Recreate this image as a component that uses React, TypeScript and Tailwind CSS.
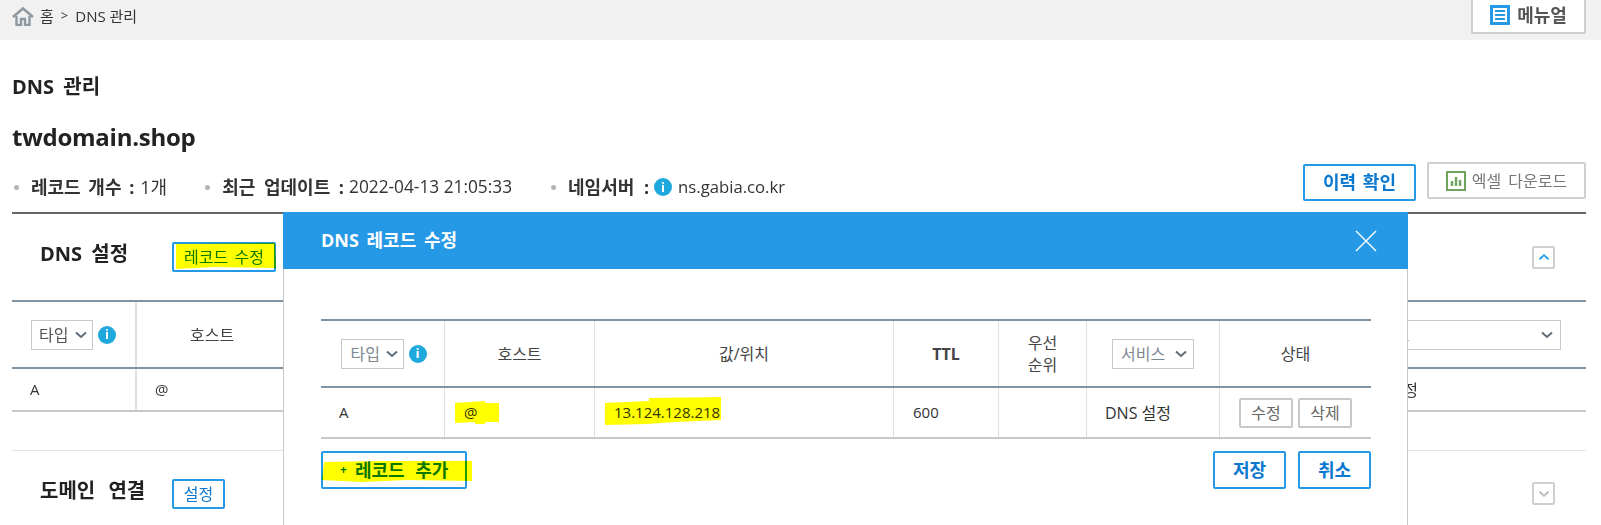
import { ReactNode } from "react";

const FONT = "font-['Open_Sans','Noto_Sans_CJK_KR',sans-serif]";

const Chevron = ({ className = "" }: { className?: string }) => (
  <svg viewBox="0 0 12 8" className={`h-[8px] w-[12px] ${className}`} fill="none" stroke="#5f6b78" strokeWidth="2">
    <polyline points="1,1.5 6,6 11,1.5" />
  </svg>
);

const Info = ({ className = "" }: { className?: string }) => (
  <span className={`flex h-[18px] w-[18px] shrink-0 items-center justify-center rounded-full bg-[#1ea8dc] text-[13px] font-bold leading-none text-white ${className}`}>
    i
  </span>
);

// yellow marker strokes drawn over the screenshot
const Marker = ({ className, points, w, h }: { className: string; points: string; w: number; h: number }) => (
  <svg viewBox={`0 0 ${w} ${h}`} width={w} height={h} className={`pointer-events-none absolute mix-blend-multiply ${className}`}>
    <polygon points={points} fill="#ffff00" />
  </svg>
);

const FakeSelect = ({ label, className, muted }: { label: string; className: string; muted?: boolean }) => (
  <div className={`flex h-[30px] items-center justify-between border border-[#c8c8c8] bg-white ${className}`}>
    <span className={`text-[16px] ${muted ? "text-[#7d8791]" : "text-[#555]"}`}>{label}</span>
    <Chevron />
  </div>
);

const OutlineBtn = ({ children, className = "" }: { children: ReactNode; className?: string }) => (
  <button className={`rounded-[2px] border-2 border-[#2598e6] bg-white font-bold text-[#0b78d0] ${className}`}>{children}</button>
);

const HeadCell = ({ children, className = "" }: { children: ReactNode; className?: string }) => (
  <div className={`flex items-center justify-center border-r border-[#e0e0e0] text-[16px] text-[#444] ${className}`}>{children}</div>
);

const BodyCell = ({ children, className = "" }: { children: ReactNode; className?: string }) => (
  <div className={`relative flex items-center border-r border-[#e0e0e0] text-[15px] text-[#333] ${className}`}>{children}</div>
);

const RecordModal = () => (
  <div className="absolute left-[283px] top-[212px] h-[313px] w-[1125px] border-x border-[#c8c8c8] bg-white">
    <div className="-mx-[1px] flex h-[57px] items-center justify-between bg-[#2598e6] pl-[38px] pr-[31px]">
      <span className="text-[18px] font-bold text-white [word-spacing:3px]">DNS 레코드 수정</span>
      <svg viewBox="0 0 22 22" className="h-[22px] w-[22px]" fill="none" stroke="#fff" strokeWidth="1.4">
        <path d="M1 1 L21 21 M21 1 L1 21" />
      </svg>
    </div>

    <div className="ml-[37px] mt-[50px] w-[1050px]">
      <div className="flex h-[69px] border-y-2 border-[#7f93a3]">
        <HeadCell className="w-[124px] gap-[5px] pl-[2px]">
          <FakeSelect label="타입" muted className="w-[63px] pl-[9px] pr-[5px]" />
          <Info />
        </HeadCell>
        <HeadCell className="w-[150px]">호스트</HeadCell>
        <HeadCell className="w-[299px]">값/위치</HeadCell>
        <HeadCell className="w-[105px] text-[14.5px] font-bold">TTL</HeadCell>
        <HeadCell className="w-[88px] text-center leading-[22px]">
          우선
          <br />
          순위
        </HeadCell>
        <HeadCell className="w-[133px]">
          <FakeSelect label="서비스" muted className="w-[82px] pl-[8px] pr-[6px]" />
        </HeadCell>
        <HeadCell className="flex-1 border-r-0">상태</HeadCell>
      </div>

      <div className="flex h-[51px] border-b-2 border-[#c8c8c8]">
        <BodyCell className="w-[124px] pl-[18px]">A</BodyCell>
        <BodyCell className="w-[150px] pl-[19px]">
          @
          <Marker className="left-[10px] top-[13px]" w={44} h={23} points="0,2 30,0 30,2 44,2 44,21 30,21 30,23 20,23 20,21 0,22" />
        </BodyCell>
        <BodyCell className="w-[299px] pl-[19px]">
          13.124.128.218
          <Marker className="left-[10px] top-[9px]" w={116} h={29} points="0,6 44,4 44,1 116,0 116,23 70,25 42,27 0,28" />
        </BodyCell>
        <BodyCell className="w-[105px] pl-[19px]">600</BodyCell>
        <BodyCell className="w-[88px]"> </BodyCell>
        <BodyCell className="w-[133px] pl-[18px] text-[16px]">DNS 설정</BodyCell>
        <div className="flex flex-1 items-center justify-center gap-[5px]">
          <button className="h-[30px] w-[54px] rounded-[2px] border-2 border-[#c8c8c8] text-[16px] text-[#666]">수정</button>
          <button className="h-[30px] w-[54px] rounded-[2px] border-2 border-[#c8c8c8] text-[16px] text-[#666]">삭제</button>
        </div>
      </div>

      <div className="mt-[12px] flex items-center justify-between">
        <OutlineBtn className="relative h-[38px] w-[146px] text-[18px] [word-spacing:6px]">
          <span className="flex items-center pl-[17px]">
            <span className="mr-[8px] text-[12px]">+</span>레코드 추가
          </span>
          <Marker className="-left-[1px] top-[7px]" w={150} h={22} points="2,2 60,1 150,1 150,21 85,20 40,22 0,20" />
        </OutlineBtn>
        <div className="flex gap-[12px]">
          <OutlineBtn className="h-[38px] w-[73px] text-[18px]">저장</OutlineBtn>
          <OutlineBtn className="h-[38px] w-[73px] text-[18px]">취소</OutlineBtn>
        </div>
      </div>
    </div>
  </div>
);

export default function App() {
  return (
    <div className={`relative h-[525px] w-[1601px] overflow-hidden bg-white ${FONT}`}>
      <div className="flex h-10 items-start justify-between bg-[#f1f1f1] pl-[12px] pr-[15px]">
        <div className="flex h-[32px] items-center gap-[6px] text-[15px] text-[#333]">
          <svg viewBox="0 0 22 19" className="h-[19px] w-[22px]">
            <path d="M1 10 L11 1.5 L21 10" fill="none" stroke="#8e99a2" strokeWidth="2.6" />
            <path d="M4.5 9 V18 H9 V12 H13 V18 H17.5 V9" fill="none" stroke="#8e99a2" strokeWidth="2.4" />
          </svg>
          <span>홈</span>
          <span className="ml-[1px] text-[13px]">&gt;</span>
          <span className="ml-[1px]">DNS 관리</span>
        </div>
        <div className="flex h-[34px] w-[115px] items-center justify-center gap-[7px] rounded-b-[2px] border-2 border-t-0 border-[#cfcfcf] bg-white pb-[2px]">
          <svg viewBox="0 0 20 20" className="h-[20px] w-[20px]">
            <rect x="1.5" y="1.5" width="17" height="17" fill="#fff" stroke="#2598e6" strokeWidth="3" />
            <path d="M5 6 H15 M5 10 H15 M5 14 H15" stroke="#2598e6" strokeWidth="2" />
          </svg>
          <span className="text-[18px] font-bold text-[#555]">메뉴얼</span>
        </div>
      </div>

      <div className="pl-[12px] pr-[15px]">
        <h2 className="mt-[34px] text-[20px] font-bold leading-[26px] text-[#222] [word-spacing:4px]">DNS 관리</h2>
        <h1 className="mt-[21px] text-[24px] font-bold leading-[32px] tracking-[-0.25px] text-[#222]">twdomain.shop</h1>

        <div className="mt-[9px] flex h-[50px] items-start justify-between">
          <div className="flex h-[50px] items-center text-[17px] text-[#333]">
            <span className="ml-[2px] h-[5px] w-[5px] rounded-full bg-[#b5b5b5]" />
            <b className="ml-[12px] text-[18px] [word-spacing:3px]">레코드 개수 :</b>
            <span className="ml-[6px] text-[18px]">1개</span>
            <span className="ml-[38px] h-[5px] w-[5px] rounded-full bg-[#b5b5b5]" />
            <b className="ml-[12px] text-[18px] [word-spacing:4px]">최근 업데이트 :</b>
            <span className="ml-[5px] text-[17.3px]">2022-04-13 21:05:33</span>
            <span className="ml-[39px] h-[5px] w-[5px] rounded-full bg-[#b5b5b5]" />
            <b className="ml-[12px] text-[18px] [word-spacing:5px]">네임서버 :</b>
            <Info className="ml-[5px]" />
            <span className="ml-[6px] text-[16.7px]">ns.gabia.co.kr</span>
          </div>
          <div className="flex items-start gap-[11px]">
            <OutlineBtn className="mt-[2px] h-[37px] w-[113px] text-[18px] [word-spacing:2px]">이력 확인</OutlineBtn>
            <button className="flex h-[37px] w-[159px] items-center justify-center gap-[6px] rounded-[2px] border-2 border-[#cfcfcf] text-[16px] text-[#777] [word-spacing:3px]">
              <svg viewBox="0 0 20 20" className="h-[20px] w-[20px]">
                <rect x="1" y="1" width="18" height="18" fill="#fff" stroke="#6fa55a" strokeWidth="2" />
                <path d="M6 15 V10 M10 15 V6 M14 15 V9" stroke="#6fa55a" strokeWidth="2.4" />
              </svg>
              엑셀 다운로드
            </button>
          </div>
        </div>

        <div className="border-t-2 border-[#666]">
          <div className="flex h-[86px] items-center pl-[28px] pr-[31px]">
            <h3 className="mb-[6px] w-[132px] text-[20px] font-bold text-[#222] [word-spacing:4px]">DNS 설정</h3>
            <OutlineBtn className="relative h-[30px] w-[104px] text-[16px] font-normal [word-spacing:2px]">
              레코드 수정
              <Marker className="left-[1px] -top-[1px]" w={101} h={26} points="1,1 100,0 101,25 40,24 1,26" />
            </OutlineBtn>
            <button className="ml-auto flex h-[23px] w-[23px] items-center justify-center rounded-[2px] border-2 border-[#cfcfcf]">
              <Chevron className="rotate-180 scale-90 [&_polyline]:stroke-[#2598e6]" />
            </button>
          </div>

          <div className="flex h-[69px] border-y-2 border-[#7f93a3]">
            <HeadCell className="w-[125px] gap-[5px] border-r-2 pr-[1px] pl-[1px]">
              <FakeSelect label="타입" className="w-[62px] pl-[7px] pr-[5px]" />
              <Info />
            </HeadCell>
            <div className="flex flex-1 items-center justify-between">
              <span className="ml-[53px] text-[16px] text-[#444]">호스트</span>
              <div className="mr-[25px] flex h-[30px] w-[200px] items-center justify-between border border-[#c8c8c8] pl-[3px] pr-[7px]">
                <span className="text-[16px] text-[#555]">서비스</span>
                <Chevron />
              </div>
            </div>
          </div>
          <div className="flex h-[43px] border-b-2 border-[#c8c8c8]">
            <BodyCell className="w-[125px] border-r-2 pl-[18px]">A</BodyCell>
            <div className="flex flex-1 items-center justify-between text-[15px] text-[#333]">
              <span className="ml-[18px]">@</span>
              <span className="mr-[168px] text-[16px]">설정</span>
            </div>
          </div>

          <div className="mt-[38px] flex h-[86px] items-center border-t border-[#e3e3e3] pl-[28px] pr-[31px]">
            <h3 className="mb-[6px] w-[132px] text-[20px] font-bold text-[#222] [word-spacing:8px]">도메인 연결</h3>
            <OutlineBtn className="h-[30px] w-[53px] text-[16px] font-normal">설정</OutlineBtn>
            <button className="ml-auto flex h-[23px] w-[23px] items-center justify-center rounded-[2px] border-2 border-[#cfcfcf]">
              <Chevron className="scale-90 [&_polyline]:stroke-[#bbb]" />
            </button>
          </div>
        </div>
      </div>

      <RecordModal />
    </div>
  );
}
